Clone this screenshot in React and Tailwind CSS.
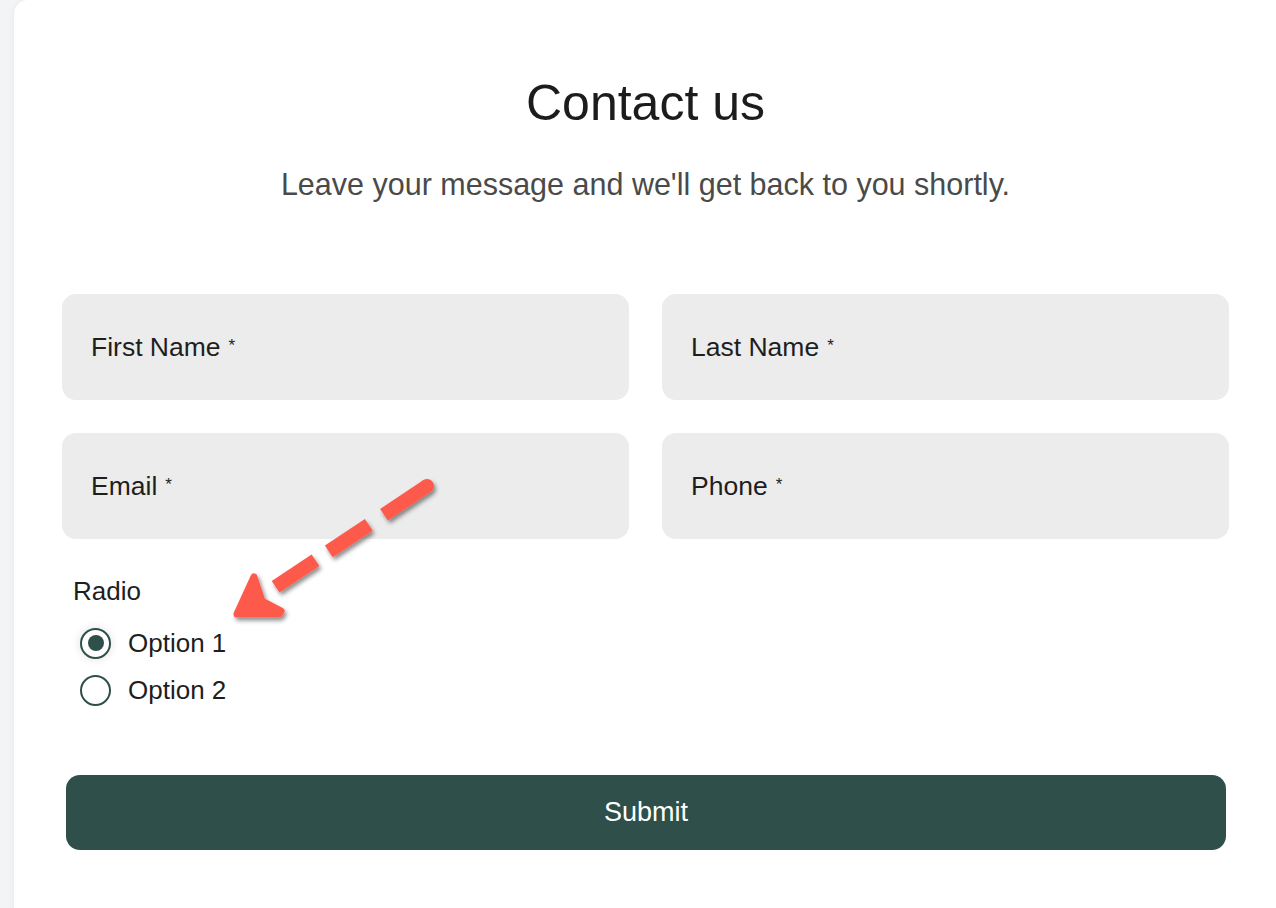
import React, { useState } from "react";

const Field = ({ label }) => (
  <div className="h-[106px] rounded-[14px] bg-[#ececec] flex items-center px-[29px] text-[26.5px] leading-none text-[#1e1e1e]">
    <span className="relative top-[1px]">{label}</span>
    <span className="ml-[8px] text-[17px] relative -top-[1px]">*</span>
  </div>
);

const RadioOption = ({ label, checked, onSelect }) => (
  <label className="h-[47px] flex items-center cursor-pointer" onClick={onSelect}>
    <span
      className={
        "ml-[7px] w-[31px] h-[31px] rounded-full border-2 border-[#2f4f4a] bg-white flex items-center justify-center " +
        (checked ? "shadow-[0_0_10px_rgba(0,0,0,0.12)]" : "")
      }
    >
      {checked ? <span className="w-[16px] h-[16px] rounded-full bg-[#2f4f4a]" /> : null}
    </span>
    <span className="ml-[17px] text-[26px] leading-none text-[#1e1e1e]">{label}</span>
  </label>
);

// dashed pointer drawn over the form
const Arrow = () => (
  <svg className="absolute left-0 top-0 pointer-events-none" width="1276" height="908">
    <defs>
      <filter id="arrowShadow" x="-20%" y="-20%" width="140%" height="140%">
        <feDropShadow dx="2" dy="3" stdDeviation="2" floodColor="#000" floodOpacity="0.45" />
      </filter>
    </defs>
    <g filter="url(#arrowShadow)" fill="#fd5a4b" stroke="#fd5a4b">
      <line x1="427" y1="486" x2="384" y2="514.8" strokeWidth="14" />
      <circle cx="427" cy="486" r="7" stroke="none" />
      <line x1="368.8" y1="524.8" x2="328.8" y2="551.4" strokeWidth="14" />
      <line x1="315.5" y1="560.2" x2="275.6" y2="586.8" strokeWidth="14" />
      <polygon
        points="237,614 254,577 262,601 281,611 279,614"
        strokeWidth="7"
        strokeLinejoin="round"
      />
    </g>
  </svg>
);

export default function App() {
  const [choice, setChoice] = useState(1);

  return (
    <div
      className="relative w-full h-[908px] overflow-hidden bg-[#f3f4f6] pl-[14px]"
      style={{ fontFamily: '"Liberation Sans", Arial, sans-serif' }}
    >
      <div className="w-[1263px] h-[940px] bg-white rounded-tl-[14px] shadow-[0_0_6px_rgba(0,0,0,0.06)] px-[48px] pt-[78px]">
        <h1 className="text-center text-[50px] leading-none text-[#1c1c1c]">Contact us</h1>
        <p className="mt-[41px] text-center text-[30.5px] leading-none text-[#4a4a4a]">
          Leave your message and we'll get back to you shortly.
        </p>

        <form className="mt-[94px]" onSubmit={(e) => e.preventDefault()}>
          <div className="grid grid-cols-2 gap-x-[33px] gap-y-[33px]">
            <Field label="First Name" />
            <Field label="Last Name" />
            <Field label="Email" />
            <Field label="Phone" />
          </div>

          <div className="mt-[39px] pl-[11px]">
            <div className="text-[26px] leading-none text-[#1e1e1e]">Radio</div>
            <div className="mt-[16px]">
              <RadioOption label="Option 1" checked={choice === 1} onSelect={() => setChoice(1)} />
              <RadioOption label="Option 2" checked={choice === 2} onSelect={() => setChoice(2)} />
            </div>
          </div>

          <button
            type="submit"
            className="mt-[61px] ml-[4px] w-[1160px] h-[75px] rounded-[14px] bg-[#2f4f4a] text-white text-[27px] leading-none"
          >
            Submit
          </button>
        </form>
      </div>
      <Arrow />
    </div>
  );
}
